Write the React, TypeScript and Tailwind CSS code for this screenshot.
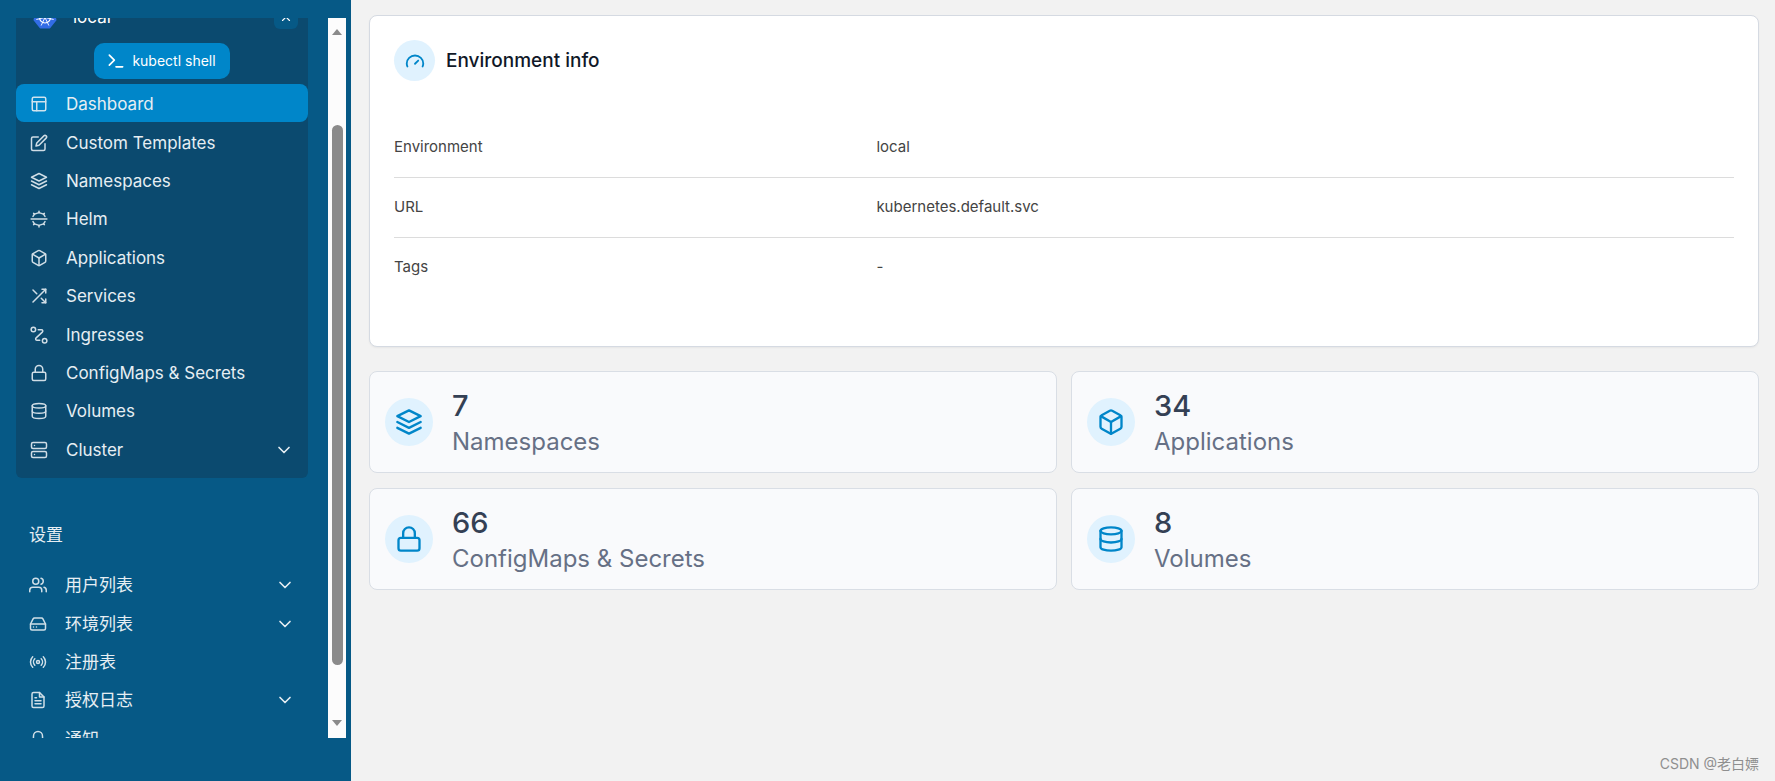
import type { ComponentType, ReactNode } from "react"
import {
  FiBell,
  FiBox,
  FiChevronDown,
  FiDatabase,
  FiEdit,
  FiFileText,
  FiHardDrive,
  FiLayers,
  FiLayout,
  FiLock,
  FiServer,
  FiShuffle,
  FiUsers,
  FiX,
} from "react-icons/fi"
import { Radio } from "lucide-react"

type IconType = ComponentType<{ className?: string }>

type NavItem = {
  label: string
  icon: IconType
  active?: boolean
  expandable?: boolean
}

function StrokeIcon({ className, children }: { className?: string; children: ReactNode }) {
  return (
    <svg
      className={className}
      viewBox="0 0 24 24"
      fill="none"
      stroke="currentColor"
      strokeWidth="2"
      strokeLinecap="round"
      strokeLinejoin="round"
      aria-hidden="true"
    >
      {children}
    </svg>
  )
}

function HelmIcon({ className }: { className?: string }) {
  return (
    <StrokeIcon className={className}>
      <path d="M1.500 12h21" />
      <path d="M4 8.500 6 5.500 12 3.500l6 2 2 3M4 15.500l2 3 6 2 6-2 2-3" />
      <path d="M12 3.500v-2M12 22.500v-2M6 5.500l-1.200-1M18 5.500l1.200-1M6 18.500l-1.200 1M18 18.500l1.200 1" />
    </StrokeIcon>
  )
}

function RouteIcon({ className }: { className?: string }) {
  return (
    <StrokeIcon className={className}>
      <circle cx="4.500" cy="4.500" r="3" />
      <circle cx="19.500" cy="19.500" r="3" />
      <path d="M11 5h4.200c1.800 0 2.500 2 1.200 3.200L8.200 15.800C6.900 17 7.600 19 9.400 19H13" />
    </StrokeIcon>
  )
}

function GaugeIcon({ className }: { className?: string }) {
  return (
    <StrokeIcon className={className}>
      <path d="m12 15 3.500-3.500" />
      <path d="M20.300 18c.4-1 .7-2.200.7-3.400C21 9.800 17 6 12 6s-9 3.800-9 8.600c0 1.200.3 2.400.7 3.400" />
    </StrokeIcon>
  )
}

function TerminalIcon({ className }: { className?: string }) {
  return (
    <StrokeIcon className={className}>
      <path d="m4 17 6-6-6-6M12 19h8" />
    </StrokeIcon>
  )
}

function KubernetesLogo({ className }: { className?: string }) {
  return (
    <svg className={className} viewBox="0 0 24 24" fill="none" aria-hidden="true">
      <path
        d="M12 0.500 3.500 4.500a1.500 1.500 0 0 0-.8 1L.6 14.500a1.500 1.500 0 0 0 .3 1.300l5.800 7.200a1.500 1.500 0 0 0 1.200.6h8.200a1.500 1.500 0 0 0 1.200-.6l5.800-7.200a1.500 1.500 0 0 0 .3-1.300l-2.100-9a1.500 1.500 0 0 0-.8-1z"
        fill="#326ce5"
      />
      <g stroke="#fff" strokeLinecap="round">
        <circle cx="12" cy="12.500" r="5.500" strokeWidth="1.200" />
        <path
          d="M12 12.500V4M12 12.500l6.700-5.300M12 12.500l8.300 1.900M12 12.500l3.700 7.700M12 12.500l-3.700 7.700M12 12.500l-8.300 1.900M12 12.500 5.300 7.200"
          strokeWidth="0.900"
        />
      </g>
    </svg>
  )
}

const clusterNav: NavItem[] = [
  { label: "Dashboard", icon: FiLayout, active: true },
  { label: "Custom Templates", icon: FiEdit },
  { label: "Namespaces", icon: FiLayers },
  { label: "Helm", icon: HelmIcon },
  { label: "Applications", icon: FiBox },
  { label: "Services", icon: FiShuffle },
  { label: "Ingresses", icon: RouteIcon },
  { label: "ConfigMaps & Secrets", icon: FiLock },
  { label: "Volumes", icon: FiDatabase },
  { label: "Cluster", icon: FiServer, expandable: true },
]

const settingsNav: NavItem[] = [
  { label: "用户列表", icon: FiUsers, expandable: true },
  { label: "环境列表", icon: FiHardDrive, expandable: true },
  { label: "注册表", icon: Radio },
  { label: "授权日志", icon: FiFileText, expandable: true },
  { label: "通知", icon: FiBell },
]

const envRows = [
  { name: "Environment", value: "local" },
  { name: "URL", value: "kubernetes.default.svc" },
  { name: "Tags", value: "-" },
]

const stats: { value: number; label: string; icon: IconType }[] = [
  { value: 7, label: "Namespaces", icon: FiLayers },
  { value: 34, label: "Applications", icon: FiBox },
  { value: 66, label: "ConfigMaps & Secrets", icon: FiLock },
  { value: 8, label: "Volumes", icon: FiDatabase },
]

function NavLink({ item }: { item: NavItem }) {
  const Icon = item.icon
  return (
    <li className="flex">
      <a
        href="#"
        className={`flex flex-1 items-center rounded-lg px-[14px] pt-0.5 text-[17px] leading-6 text-[#e6eef3] ${item.active ? "bg-[#0086c9]" : ""}`}
      >
        <Icon className="mr-[18px] size-[18px] shrink-0 opacity-90" />
        <span className="flex-1">{item.label}</span>
        {item.expandable && <FiChevronDown className="size-5" />}
      </a>
    </li>
  )
}

function Scrollbar() {
  return (
    <div className="flex w-[18px] flex-col items-center bg-[#fcfcfc] pt-[11px] pb-3" aria-hidden="true">
      <div className="border-x-[5px] border-b-[6px] border-x-transparent border-b-[#8b8b8b]" />
      <div className="grow-[90]" />
      <div className="w-[11px] grow-[540] rounded-full bg-[#8b8b8b]" />
      <div className="grow-[55]" />
      <div className="border-x-[5px] border-t-[6px] border-x-transparent border-t-[#8b8b8b]" />
    </div>
  )
}

function Sidebar() {
  return (
    <aside className="flex w-[351px] shrink-0 bg-[#065986] pt-[18px] pr-[5px] pb-[43px] pl-4">
      <div className="mr-5 flex-1 overflow-hidden">
        <div className="-mt-[13px] rounded-md bg-[#0b4a6f] pb-[10px]">
          <div className="flex h-6 items-center pr-[10px] pl-[17px] text-white">
            <KubernetesLogo className="size-6" />
            <span className="ml-4 flex-1 text-[17px] leading-6">local</span>
            <button
              type="button"
              aria-label="Close"
              className="flex size-6 items-center justify-center rounded-md bg-[#065986]"
            >
              <FiX className="size-3.5" />
            </button>
          </div>
          <button
            type="button"
            className="mx-auto mt-[14px] mb-[5px] flex h-9 items-center gap-1.5 rounded-[10px] bg-[#0086c9] pr-3.5 pl-3 text-sm text-white"
          >
            <TerminalIcon className="size-5" />
            kubectl shell
          </button>
          <ul className="grid h-96 auto-rows-fr">
            {clusterNav.map((item) => (
              <NavLink key={item.label} item={item} />
            ))}
          </ul>
        </div>

        <h2 className="mt-[45px] mb-[18px] pl-[13px] text-[17px] leading-6 text-[#e6eef3]">设置</h2>
        <ul className="-mx-px grid h-48 auto-rows-fr">
          {settingsNav.map((item) => (
            <NavLink key={item.label} item={item} />
          ))}
        </ul>
      </div>
      <Scrollbar />
    </aside>
  )
}

function EnvironmentInfo() {
  return (
    <section className="rounded-lg border border-[#d5dae2] bg-white px-6 pt-6 pb-[49px] shadow-xs">
      <div className="flex items-center gap-[11px]">
        <div className="flex size-[41px] items-center justify-center rounded-full bg-[#e0f2fe] text-[#0086c9]">
          <GaugeIcon className="size-[22px]" />
        </div>
        <h1 className="text-[19px] leading-6 font-medium text-[#101828]">Environment info</h1>
      </div>
      <table className="mt-9 w-full table-fixed text-left text-[15px] leading-5 text-[#444]">
        <tbody>
          {envRows.map((row) => (
            <tr key={row.name} className="h-[60px] border-b border-[#dcdcdc] last:border-b-0">
              <th scope="row" className="w-[36%] font-normal">
                {row.name}
              </th>
              <td>{row.value}</td>
            </tr>
          ))}
        </tbody>
      </table>
    </section>
  )
}

function StatCard({ value, label, icon: Icon }: { value: number; label: string; icon: IconType }) {
  return (
    <a
      href="#"
      className="flex items-center gap-[19px] rounded-lg border border-[#d9dee5] bg-[#f9fafc] px-[15px] py-[14px]"
    >
      <div className="flex size-12 shrink-0 items-center justify-center rounded-full bg-[#e0f2fe] text-[#0086c9]">
        <Icon className="size-7" />
      </div>
      <div>
        <div className="text-[29px] leading-10 font-medium text-[#344054]">{value}</div>
        <div className="text-2xl leading-8 text-[#667085]">{label}</div>
      </div>
    </a>
  )
}

export default function App() {
  return (
    <div className="flex h-screen bg-[#f2f2f2] font-['Inter','Noto_Sans_CJK_SC',sans-serif]">
      <Sidebar />
      <main className="relative flex-1 pt-[15px] pr-4 pl-[18px]">
        <EnvironmentInfo />
        <div className="mt-6 grid grid-cols-2 gap-x-[14px] gap-y-[15px]">
          {stats.map((stat) => (
            <StatCard key={stat.label} {...stat} />
          ))}
        </div>
        <p className="absolute right-4 bottom-[7px] text-sm leading-5 text-[#8f8f8f]">CSDN @老白嫖</p>
      </main>
    </div>
  )
}
